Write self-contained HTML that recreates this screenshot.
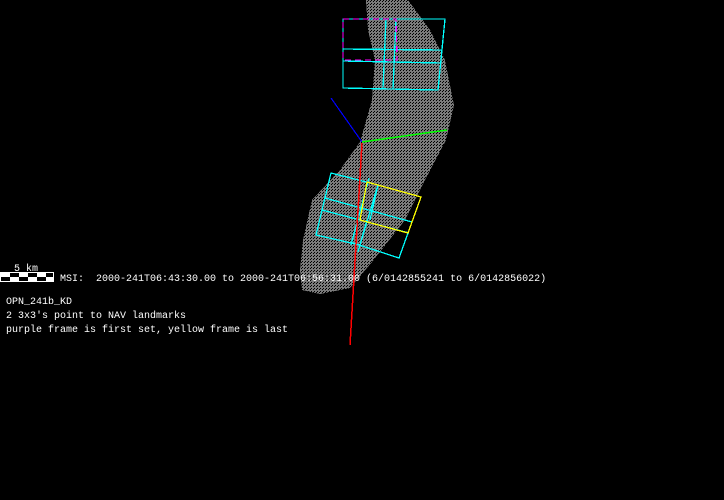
<!DOCTYPE html>
<html><head><style>
html,body{margin:0;padding:0;background:#000;width:724px;height:500px;overflow:hidden}
svg{position:absolute;left:0;top:0}
.t{font-family:"Liberation Mono",monospace;font-size:10px;fill:#fff}
</style></head><body>
<svg width="724" height="500" viewBox="0 0 724 500" shape-rendering="crispEdges">
<defs>
<pattern id="p" width="3" height="3" patternUnits="userSpaceOnUse">
<rect width="3" height="3" fill="#7a7a7a"/><rect x="1" y="1" width="1" height="1" fill="#000"/><rect x="2" y="0" width="1" height="1" fill="#000"/>
</pattern>
</defs>
<path d="M366,0 L408,0 L430,30 L445,60 L454,105 L446,140 L425,180 L405,220 L372,262 L350,288 L320,294 L302,290 L300,270 L303,240 L312,200 L340,170 L360,142 L372,100 L375,60 L368,30 Z" fill="url(#p)"/>
<g fill="none" stroke="#00ffff" stroke-width="1.3">
<path d="M343,19 L445,19 L438,90 L343,88 Z"/>
<path d="M343,49 L442,50"/><path d="M343,61 L441,63"/>
<path d="M386,19 L383,88"/><path d="M396,19 L393,89"/>
<path d="M331,173 L378,185 L360,245 L316,235 Z"/>
<path d="M325,198 L412,222"/><path d="M322,210 L409,233"/>
<path d="M378,185 L370,220"/><path d="M369,178 L351,245"/>
<path d="M412,222 L399,258 L353,243"/>
<path d="M367,220 L358,252"/>
</g>
<path d="M343,19 L396,19 L397,60 L343,60 Z" fill="none" stroke="#ff00ff" stroke-width="1.3" stroke-dasharray="6,4"/>
<g fill="none" stroke="#ffff00" stroke-width="1.3">
<path d="M367,182 L421,197 L408,233 L360,220 Z"/>
</g>
<path d="M331,98 L362,142" stroke="#0000ff" stroke-width="1.2"/>
<path d="M362,142 L447,130" stroke="#00ff00" stroke-width="1.5"/>
<path d="M362,143 L350,345" stroke="#ff0000" stroke-width="1.5"/>
<rect x="0" y="272" width="54" height="10" fill="#fff"/>
<rect x="1" y="273" width="52" height="8" fill="#000"/>
<rect x="1" y="273" width="9" height="4" fill="#fff"/><rect x="19" y="273" width="9" height="4" fill="#fff"/><rect x="37" y="273" width="9" height="4" fill="#fff"/>
<rect x="10" y="277" width="9" height="4" fill="#fff"/><rect x="28" y="277" width="9" height="4" fill="#fff"/><rect x="46" y="277" width="7" height="4" fill="#fff"/>
<text class="t" x="14" y="271">5 km</text>
<text class="t" x="60" y="281" xml:space="preserve">MSI:  2000-241T06:43:30.00 to 2000-241T06:56:31.00 (6/0142855241 to 6/0142856022)</text>
<text class="t" x="6" y="304">OPN_241b_KD</text>
<text class="t" x="6" y="318">2 3x3's point to NAV landmarks</text>
<text class="t" x="6" y="332">purple frame is first set, yellow frame is last</text>
</svg>
</body></html>
